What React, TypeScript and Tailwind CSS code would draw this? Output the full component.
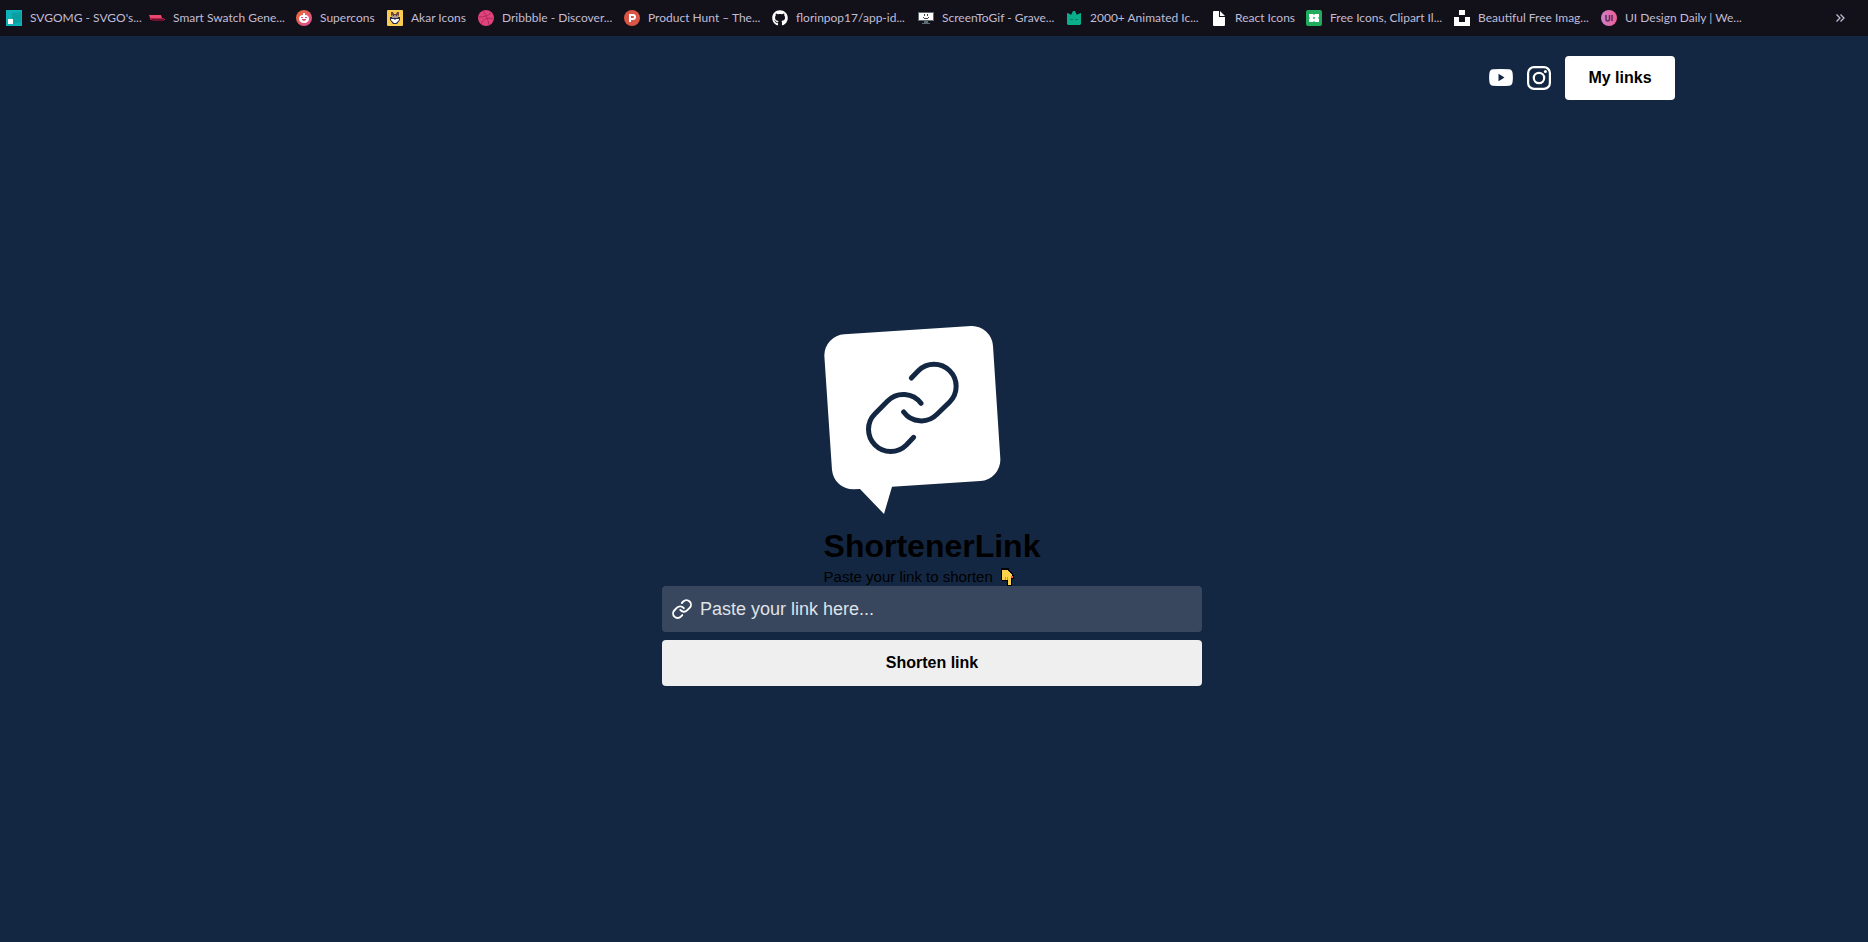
import React from "react";
import { FaGithub } from "react-icons/fa";

type Bookmark = { label: string; width: string; icon: React.ReactNode };

const svgProps = { viewBox: "0 0 16 16", className: "size-4 shrink-0", "aria-hidden": true } as const;

const bookmarks: Bookmark[] = [
  {
    label: "SVGOMG - SVGO's...",
    width: "w-[143px]",
    icon: (
      <svg {...svgProps}>
        <path fill="#0db0b6" d="M0 0h16v16H0z" />
        <path fill="#0aa0a2" d="M6 3l9-1v10l-8 2-1-5z" />
        <path fill="#fff" d="M2 9h5v5H2z" />
      </svg>
    ),
  },
  {
    label: "Smart Swatch Gene...",
    width: "w-[147px]",
    icon: (
      <svg {...svgProps}>
        <path fill="#e8486f" d="M0 5h12l1 3H1z" />
        <path fill="#b0204a" d="M1 8h13l2 1v1H1z" />
        <path fill="#6d1230" d="M2 9h13v2H4z" />
      </svg>
    ),
  },
  {
    label: "Supercons",
    width: "w-[91px]",
    icon: (
      <svg {...svgProps}>
        <defs>
          <linearGradient id="supercons" x1="0" y1="0" x2="1" y2="1">
            <stop offset="0" stopColor="#e8702c" />
            <stop offset="1" stopColor="#e0479e" />
          </linearGradient>
        </defs>
        <circle cx="8" cy="8" r="8" fill="url(#supercons)" />
        <path fill="#fff" d="M7 3h2v2c3 0 4 2 4 4s-2 4-5 4-5-2-5-4 1-4 4-4z" />
        <path fill="#d84a6a" d="M5 7h2v1H5zM9 7h2v1H9zM6 9h4v1l-2 1-2-1z" />
      </svg>
    ),
  },
  {
    label: "Akar Icons",
    width: "w-[91px]",
    icon: (
      <svg {...svgProps}>
        <rect width="16" height="16" rx="1" fill="#f7cc50" />
        <path fill="#70443a" d="M4 2h2l1 2h2l1-2h2v3l-1 2H5L4 5z" />
        <path fill="#2c2a4a" d="M3 7h10v3l-3 4H6l-3-4z" />
        <path fill="#a8958c" d="M5 5h6v3H5z" />
        <path fill="#fff" d="M4 9h3l1 1 1-1h3v1l-3 3H7l-3-3z" />
        <path fill="#40304a" d="M6 5h1v1H6zM9 5h1v1H9z" />
      </svg>
    ),
  },
  {
    label: "Dribbble - Discover...",
    width: "w-[146px]",
    icon: (
      <svg {...svgProps}>
        <circle cx="8" cy="8" r="8" fill="#e0427c" />
        <path
          fill="none"
          stroke="#b52a5c"
          d="M5 1c3 4 5 8 6 14M1 7c5 0 9-1 12-4M3 14c2-5 6-7 12-5"
        />
      </svg>
    ),
  },
  {
    label: "Product Hunt – The...",
    width: "w-[148px]",
    icon: (
      <svg {...svgProps}>
        <circle cx="8" cy="8" r="8" fill="#da5545" />
        <path
          fill="#fff"
          fillRule="evenodd"
          d="M5 4h4a3 3 0 0 1 0 6H7v2H5zM7 6v2h2a1 1 0 0 0 0-2z"
        />
      </svg>
    ),
  },
  {
    label: "florinpop17/app-id...",
    width: "w-[146px]",
    icon: <FaGithub className="size-4 shrink-0 text-white" aria-hidden />,
  },
  {
    label: "ScreenToGif - Grave...",
    width: "w-[148px]",
    icon: (
      <svg {...svgProps}>
        <path fill="#5b6c72" d="M0 2h16v9H0zM6 11h4v2H6zM4 13h8v1H4z" />
        <path fill="#fff" d="M1 3h14v7H1z" />
        <path fill="#3c4a50" d="M6 4h1v2H6zM9 4h1v2H9zM5 7h1v1H5zM10 7h1v1h-1zM6 8h4v1H6z" />
      </svg>
    ),
  },
  {
    label: "2000+ Animated Ic...",
    width: "w-[145px]",
    icon: (
      <svg {...svgProps}>
        <path fill="#0aae8a" d="M1 3l3 1 1 1 2-4h2l2 4 1-1 3-1v11l-1 1H2l-1-1z" />
        <path fill="#067a66" d="M4 9h3v1H4zM9 9h3v1H9z" />
      </svg>
    ),
  },
  {
    label: "React Icons",
    width: "w-[95px]",
    icon: (
      <svg {...svgProps}>
        <path fill="#fff" d="M2 2q0-1 1-1h5v6h6v8q0 1-1 1H3q-1 0-1-1z" />
        <path fill="#fff" d="M9 1l5 5H9z" />
      </svg>
    ),
  },
  {
    label: "Free Icons, Clipart Il...",
    width: "w-[148px]",
    icon: (
      <svg {...svgProps}>
        <rect width="16" height="16" rx="2" fill="#20ac5c" />
        <path fill="#fff" d="M3 4h4l1 1 1-1h4v3l-1 1 1 1v3H9l-1-1-1 1H3V9l1-1-1-1z" />
        <path fill="#67c48c" d="M7 7h2v2H7z" />
      </svg>
    ),
  },
  {
    label: "Beautiful Free Imag...",
    width: "w-[147px]",
    icon: (
      <svg {...svgProps}>
        <path fill="#fff" d="M5 0h6v5H5zM0 7h5v5h6V7h5v9H0z" />
      </svg>
    ),
  },
  {
    label: "UI Design Daily | We...",
    width: "w-[150px]",
    icon: (
      <svg {...svgProps}>
        <defs>
          <linearGradient id="uidaily">
            <stop offset="0" stopColor="#d080cc" />
            <stop offset="1" stopColor="#ef5b92" />
          </linearGradient>
        </defs>
        <circle cx="8" cy="8" r="8" fill="url(#uidaily)" />
        <path fill="none" stroke="#54305e" strokeWidth="1.5" d="M5 5v4q0 2 1.700 2T8.500 9V5M11 5v6" />
      </svg>
    ),
  },
];

function LinkMark({ className, strokeWidth }: { className: string; strokeWidth: number }) {
  return (
    <svg
      viewBox="190 145 293 295"
      className={className}
      fill="none"
      stroke="currentColor"
      strokeWidth={strokeWidth}
      strokeLinecap="round"
      aria-hidden
    >
      <path d="M334 204L355 182A66 66 0 0 1 449 276L411 313A66 66 0 0 1 311 306" />
      <path d="M341 382L319 405A66 66 0 0 1 225 311L263 273A66 66 0 0 1 363 280" />
    </svg>
  );
}

function Logo() {
  return (
    <svg viewBox="72 48 531 564" className="h-[188px] w-[177px]" role="img" aria-label="Link in a speech bubble">
      <path
        fill="#fff"
        d="M133 73L513 48A64 64 0 0 1 579 108L601 446A64 64 0 0 1 541 513L276 530L252 612L180 537L161 538A64 64 0 0 1 96 480L73 137A63 63 0 0 1 133 73Z"
      />
      <g fill="none" stroke="#142742" strokeWidth="15" strokeLinecap="round">
        <path d="M334 204L355 182A66 66 0 0 1 449 276L411 313A66 66 0 0 1 311 306" />
        <path d="M341 382L319 405A66 66 0 0 1 225 311L263 273A66 66 0 0 1 363 280" />
      </g>
    </svg>
  );
}

function PointingHand() {
  return (
    <svg viewBox="0 0 13 18" className="h-[18px] w-[13px] shrink-0" shapeRendering="crispEdges" aria-hidden>
      <path fill="#000" d="M0 0h8v2h1v1h1v1h1v1h1v2h1v4h-2v7H6v-5H1v-1H0z" />
      <path fill="#ffd24d" d="M1 2h6v1h1v1h1v1h1v1h1v2h1v1h-2v8H7v-5H1z" />
      <path fill="#e08a3c" d="M4 9h1v3H4zM6 9h1v3H6z" />
      <path fill="#e8604c" d="M10 8h2v2h-2z" />
    </svg>
  );
}

export default function App() {
  return (
    <div className="flex min-h-screen flex-col bg-[#142742] font-['Liberation_Sans',Arial,sans-serif] text-black">
      <nav
        aria-label="Bookmarks"
        className="flex h-9 items-center bg-[#121018] pr-5 pl-1.5 font-[Lato,sans-serif] text-xs text-[#c1bdd6]"
      >
        <ul className="flex min-w-0 flex-1 overflow-hidden">
          {bookmarks.map(({ label, width, icon }) => (
            <li key={label} className={`${width} shrink-0`}>
              <a href="#" className="flex items-center gap-2 whitespace-nowrap">
                {icon}
                {label}
              </a>
            </li>
          ))}
        </ul>
        <button type="button" aria-label="More bookmarks" className="flex w-4 justify-center">
          <svg viewBox="0 0 9 8" className="h-2 w-[9px]" fill="none" stroke="currentColor" strokeWidth="1.3" aria-hidden>
            <path d="M.5 .5L4 4 .5 7.500M4.500 .5L8 4 4.500 7.500" />
          </svg>
        </button>
      </nav>

      <header className="mx-auto flex w-full max-w-[1482px] items-center justify-end gap-3.5 py-5">
        <a href="#" aria-label="YouTube" className="text-white">
          <svg viewBox="0 0 24 24" className="size-6" fill="currentColor" aria-hidden>
            <path
              fillRule="evenodd"
              d="M4 3.300Q12 2.500 20 3.300Q23 3.500 23.500 6.500Q24.300 11.500 23.500 16.500Q23 19.500 20 19.700Q12 20.500 4 19.700Q1 19.500 .5 16.500Q-.3 11.500 .5 6.500Q1 3.500 4 3.300ZM9.500 7.800v7.400l6-3.700z"
            />
          </svg>
        </a>
        <a href="#" aria-label="Instagram" className="text-white">
          <svg viewBox="0 0 24 24" className="size-6" fill="none" stroke="currentColor" strokeWidth="2.200" aria-hidden>
            <rect x="1.100" y="1.100" width="21.800" height="21.800" rx="6" />
            <circle cx="12" cy="12" r="5.200" />
            <circle cx="18.400" cy="5.600" r="1.500" fill="currentColor" stroke="none" />
          </svg>
        </a>
        <button type="button" className="h-11 w-[110px] rounded bg-white font-bold">
          My links
        </button>
      </header>

      <main className="flex flex-1 flex-col items-center justify-center pr-1 pb-[50px]">
        <div className="flex flex-col">
          <Logo />
          <h1 className="mt-3.5 text-[32px] leading-9 font-bold">ShortenerLink</h1>
          <p className="mt-1 flex items-center gap-2 text-[15px] leading-[18px]">
            Paste your link to shorten
            <PointingHand />
          </p>
        </div>

        <form className="flex w-full max-w-[540px] flex-col gap-2" onSubmit={(e) => e.preventDefault()}>
          <label className="flex h-[46px] items-center gap-2 rounded bg-[#38475d] px-2.5 text-white">
            <LinkMark className="size-5 shrink-0" strokeWidth={28} />
            <input
              type="url"
              aria-label="Link to shorten"
              placeholder="Paste your link here..."
              className="min-w-0 flex-1 bg-transparent text-lg outline-none placeholder:text-[#dfe2e7]"
            />
          </label>
          <button type="submit" className="h-[46px] rounded bg-[#efefef] font-bold">
            Shorten link
          </button>
        </form>
      </main>
    </div>
  );
}
